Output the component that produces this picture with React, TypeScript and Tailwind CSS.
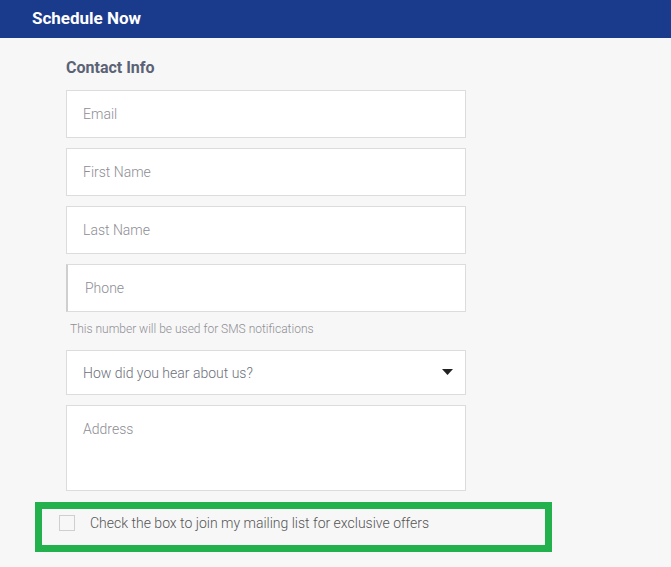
import React from "react";

function Field({ placeholder, className = "" }: { placeholder: string; className?: string }) {
  return (
    <div
      className={`flex h-[48px] w-[400px] items-center border border-[#dcdcdc] bg-white pl-[16px] text-[14px] font-light text-[#8d8d94] ${className}`}
    >
      {placeholder}
    </div>
  );
}

export default function App() {
  return (
    <div className="min-h-[567px] bg-[#f7f7f7] font-['Roboto',sans-serif]">
      <header className="flex h-[38px] items-center bg-[#1a3a8c] pl-[32px]">
        <h1 className="text-[17px] font-bold text-white">Schedule Now</h1>
      </header>

      <div className="pl-[66px] pt-[20px]">
        <h2 className="text-[16px] font-bold leading-[20px] text-[#5b6275]">Contact Info</h2>

        <div className="mt-[12px] flex flex-col gap-[10px]">
          <Field placeholder="Email" />
          <Field placeholder="First Name" />
          <Field placeholder="Last Name" />
          <Field placeholder="Phone" className="border-l-2 border-l-[#cfcfcf] pl-[17px]" />
        </div>
        <p className="mt-[10px] pl-[4px] text-[12px] font-light leading-[14px] text-[#8f8f95]">
          This number will be used for SMS notifications
        </p>

        <div className="mt-[14px] flex h-[45px] w-[400px] items-center justify-between border border-[#dcdcdc] bg-white pb-[1px] pl-[16px] pr-[12px] text-[14px] font-light text-[#6d6f7a]">
          <span className="pt-[2px]">How did you hear about us?</span>
          <svg width="11" height="6" viewBox="0 0 11 6">
            <path d="M0 0h11L5.5 6z" fill="#222" />
          </svg>
        </div>

        <div className="mt-[10px] h-[86px] w-[400px] border border-[#dcdcdc] bg-white pl-[16px] pt-[13px] text-[14px] font-light text-[#8d8d94]">
          Address
        </div>
      </div>

      <div className="ml-[35px] mt-[11px] flex h-[50px] w-[517px] items-start border-[7px] border-[#22b14c] pl-[17px] pt-[6px]">
        <span className="h-[16px] w-[16px] border border-[#cfcfcf] bg-[#f7f7f7]" />
        <span className="ml-[15px] text-[14px] font-light leading-[16px] text-[#555]">
          Check the box to join my mailing list for exclusive offers
        </span>
      </div>
    </div>
  );
}
